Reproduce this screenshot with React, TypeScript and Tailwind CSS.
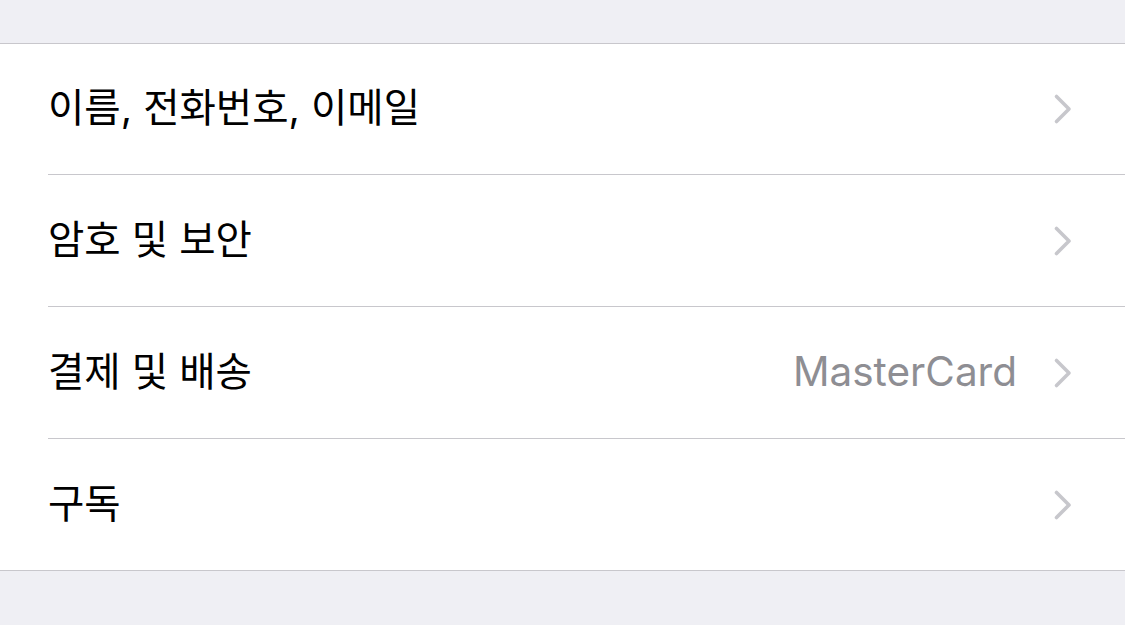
import React from 'react';

type Row = { label: string; detail?: string };

const rows: Row[] = [
  { label: '이름, 전화번호, 이메일' },
  { label: '암호 및 보안' },
  { label: '결제 및 배송', detail: 'MasterCard' },
  { label: '구독' },
];

const Chevron = () => (
  <svg width="20" height="32" viewBox="0 0 20 32" fill="none" className="shrink-0">
    <path d="M3.5 3.5 L16 16 L3.5 28.5" stroke="#c7c7cc" strokeWidth="3.6" strokeLinecap="round" strokeLinejoin="round" />
  </svg>
);

export default function App() {
  return (
    <div
      className="w-[1125px] h-[625px] bg-[#efeff4] flex flex-col"
      style={{ fontFamily: 'Inter, "Noto Sans CJK KR", sans-serif' }}
    >
      <div className="h-[44px] shrink-0 border-b border-[#c8c7cc]" />
      <div className="bg-white border-b border-[#c8c7cc]">
        {rows.map((row, i) => (
          <div key={row.label} className="pl-[48px]">
            <div
              className={`flex items-center pr-[52px] ${
                i === 0 || i === rows.length - 1 ? 'h-[131px]' : 'h-[132px]'
              } ${i < rows.length - 1 ? 'border-b border-[#c8c7cc]' : ''}`}
            >
              <span className="text-[39.5px] text-black flex-1 leading-none">{row.label}</span>
              {row.detail && (
                <span className="text-[40.5px] text-[#8e8e93] mr-[36px] leading-none">{row.detail}</span>
              )}
              <Chevron />
            </div>
          </div>
        ))}
      </div>
    </div>
  );
}
